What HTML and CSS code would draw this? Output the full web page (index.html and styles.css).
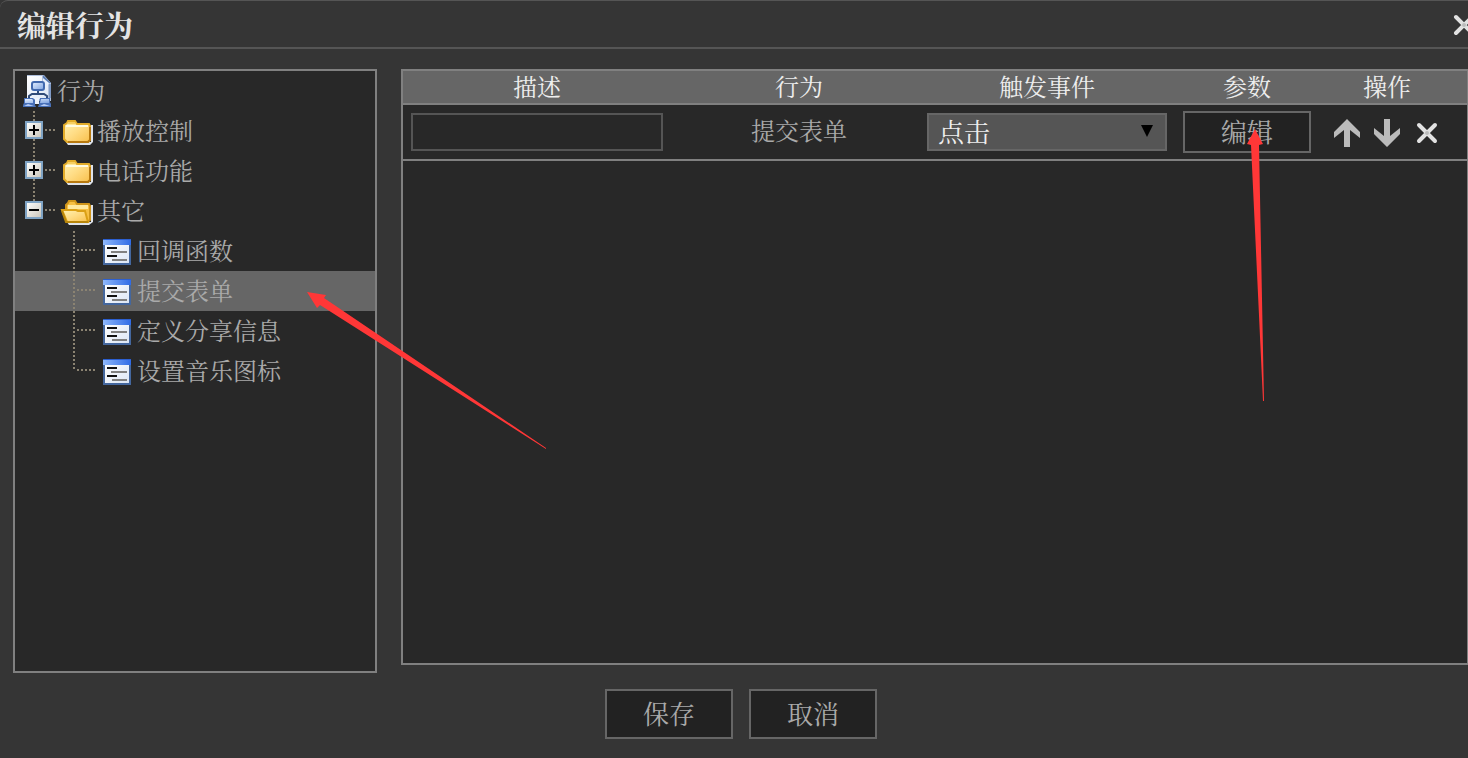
FILE: index.html
```
<!DOCTYPE html>
<html lang="zh-CN">
<head>
  <meta charset="UTF-8" />
  <meta name="viewport" content="width=device-width, initial-scale=1.0" />
  <title>编辑行为</title>
  <link rel="stylesheet" href="styles.css">
</head>
<body>
  <!-- icons -->
  <svg class="sprite" aria-hidden="true">
    <defs>
      <linearGradient id="g-folder" x1="0" y1="0" x2="1" y2="1">
        <stop offset="0" stop-color="#fff3b4" />
        <stop offset=".5" stop-color="#ffdc84" />
        <stop offset="1" stop-color="#f8c04c" />
      </linearGradient>
      <linearGradient id="g-bar" x1="0" y1="0" x2="1" y2="0">
        <stop offset="0" stop-color="#8fb8fa" />
        <stop offset="1" stop-color="#2f6be6" />
      </linearGradient>
      <linearGradient id="g-sheet" x1="0" y1="0" x2="1" y2="1">
        <stop offset="0" stop-color="#ffffff" />
        <stop offset="1" stop-color="#dce6f5" />
      </linearGradient>
      <linearGradient id="g-box" x1="0" y1="0" x2="1" y2="1">
        <stop offset="0" stop-color="#ffffff" />
        <stop offset="1" stop-color="#c9c4b8" />
      </linearGradient>
      <linearGradient id="g-node" x1="0" y1="0" x2="1" y2="1">
        <stop offset="0" stop-color="#e4efff" />
        <stop offset="1" stop-color="#7ea3e0" />
      </linearGradient>
    </defs>
    <symbol id="i-root" viewBox="0 0 40 40">
      <path d="M12 4h17l7 8v18H12z" fill="#aebfdc" />
      <path d="M12 5h15v6l6 3v14H12z" fill="url(#g-sheet)" />
      <path d="M28 4l8 8h-3l-5-3z" fill="#5b7db3" />
      <path d="M28 7l6 5-1 2h-5z" fill="#e8f0fc" />
      <path d="M34 13h2v14h-2z" fill="#7f9ac6" />
      <rect x="17" y="11" width="12" height="8" rx="2" fill="url(#g-node)" stroke="#4169ae" stroke-width="2" />
      <path d="M23 20v3M14 27v-2l3-2h12l3 2v2" fill="none" stroke="#2f4a78" stroke-width="2" />
      <path d="M20 27h4v6h-4z" fill="#eef3fb" />
      <path d="M9 27h9l2 2v5l1 2H8v-2l1-2zM25 27h10v4l1 2v3H23l1-3z" fill="#4870b8" />
      <path d="M10 28h7l1 1v3h-8zM26 28h8v4h-9z" fill="url(#g-node)" />
      <path d="M9 35l4-2 6 2zM25 35l4-2 6 2z" fill="#b4cbf5" />
    </symbol>
    <symbol id="i-plus" viewBox="0 0 18 18">
      <rect x="1" y="1" width="16" height="16" fill="url(#g-box)" stroke="#7fa3c4" stroke-width="2" />
      <path d="M4 9h10M9 4v10" stroke="#000" stroke-width="2" />
    </symbol>
    <symbol id="i-minus" viewBox="0 0 18 18">
      <rect x="1" y="1" width="16" height="16" fill="url(#g-box)" stroke="#7fa3c4" stroke-width="2" />
      <path d="M4 9h10" stroke="#000" stroke-width="2" />
    </symbol>
    <symbol id="i-folder" viewBox="0 0 40 40">
      <path d="M11 31h25V14h2v17l-3 3H13z" fill="#dfe3ea" />
      <path d="M9 14l3-2 1-2h7l2 3h12l1 2v14l-2 2H12l-3-3z" fill="url(#g-folder)" stroke="#e3ac2a" stroke-width="2" />
      <path d="M13 11h7l1 2h-9z" fill="#f6cf62" />
      <path d="M11 15h22" stroke="#fffbe0" stroke-width="2" />
      <path d="M35 16v13l-2 2H13" fill="none" stroke="#b87a10" stroke-width="2" />
    </symbol>
    <symbol id="i-open" viewBox="0 0 40 40">
      <path d="M12 31h24V14h2v17l-4 3H14z" fill="#dfe3ea" />
      <path d="M11 20v-6l2-2 1-2h6l2 3h12l1 2v14l-3 2z" fill="#f7c043" stroke="#d0951a" stroke-width="2" />
      <path d="M13 14h20v4H13z" fill="#ffe9a0" />
      <path d="M7 19h14l2 1h7l3 11H12z" fill="url(#g-folder)" stroke="#dba015" stroke-width="2" />
      <path d="M7 20l4 11h22" fill="none" stroke="#b8860b" stroke-width="2" />
    </symbol>
    <symbol id="i-item" viewBox="0 0 40 40">
      <path d="M8 8h28v26H8z" fill="#44679e" />
      <path d="M10 12h24v20H10z" fill="url(#g-sheet)" />
      <path d="M8 8h28v6H8z" fill="url(#g-bar)" />
      <path d="M8 8h28v1H8z" fill="#2c5fd0" />
      <path d="M12 17h10M12 25h10" stroke="#111" stroke-width="2" />
      <path d="M16 21h16M17 29h15" stroke="#808080" stroke-width="2" />
    </symbol>
    <symbol id="i-up" viewBox="0 0 28 28">
      <path d="M14 0l13 13v6l-10-8v17h-6V11L1 19v-6z" />
    </symbol>
    <symbol id="i-close" viewBox="0 0 22 22">
      <path d="M3 3l16 16M19 3L3 19" fill="none" stroke="#e2e2e2" stroke-width="4" stroke-linecap="round" />
      <circle cx="11" cy="11" r="2" fill="#bbb" />
    </symbol>
  </svg>

  <div class="dialog">
    <header class="dialog-head">
      <h1>编辑行为</h1>
      <button type="button" class="icon-btn" aria-label="关闭"><svg class="icon-x"><use href="#i-close" /></svg></button>
    </header>

    <div class="dialog-body">
      <ul class="tree">
        <li>
          <div class="node"><svg class="cell"><use href="#i-root" /></svg><span>行为</span></div>
          <ul>
            <li>
              <div class="node">
                <button type="button" class="cell branch" aria-label="展开"><svg><use href="#i-plus" /></svg></button>
                <svg class="cell"><use href="#i-folder" /></svg><span>播放控制</span>
              </div>
            </li>
            <li>
              <div class="node">
                <button type="button" class="cell branch" aria-label="展开"><svg><use href="#i-plus" /></svg></button>
                <svg class="cell"><use href="#i-folder" /></svg><span>电话功能</span>
              </div>
            </li>
            <li>
              <div class="node">
                <button type="button" class="cell branch last" aria-label="收起"><svg><use href="#i-minus" /></svg></button>
                <svg class="cell"><use href="#i-open" /></svg><span>其它</span>
              </div>
              <ul>
                <li><div class="node leaf"><i class="cell line"></i><svg class="cell"><use href="#i-item" /></svg><span>回调函数</span></div></li>
                <li><div class="node leaf selected"><i class="cell line"></i><svg class="cell"><use href="#i-item" /></svg><span>提交表单</span></div></li>
                <li><div class="node leaf"><i class="cell line"></i><svg class="cell"><use href="#i-item" /></svg><span>定义分享信息</span></div></li>
                <li><div class="node leaf"><i class="cell line last"></i><svg class="cell"><use href="#i-item" /></svg><span>设置音乐图标</span></div></li>
              </ul>
            </li>
          </ul>
        </li>
      </ul>

      <div class="list">
        <table>
          <colgroup>
            <col class="col-desc"><col class="col-name"><col class="col-event"><col class="col-param"><col class="col-ops"><col>
          </colgroup>
          <thead>
            <tr><th>描述</th><th>行为</th><th>触发事件</th><th>参数</th><th>操作</th><th></th></tr>
          </thead>
          <tbody>
            <tr>
              <td><input type="text" class="desc" aria-label="描述"></td>
              <td class="name">提交表单</td>
              <td>
                <div class="select">
                  <select aria-label="触发事件"><option>点击</option></select>
                </div>
              </td>
              <td><button type="button" class="btn btn-small">编辑</button></td>
              <td>
                <div class="ops">
                  <button type="button" class="icon-btn" aria-label="上移"><svg class="icon-arrow"><use href="#i-up" /></svg></button>
                  <button type="button" class="icon-btn" aria-label="下移"><svg class="icon-arrow down"><use href="#i-up" /></svg></button>
                  <button type="button" class="icon-btn" aria-label="删除"><svg class="icon-x"><use href="#i-close" /></svg></button>
                </div>
              </td>
              <td></td>
            </tr>
          </tbody>
        </table>
      </div>
    </div>

    <footer class="dialog-foot">
      <button type="button" class="btn">保存</button>
      <button type="button" class="btn">取消</button>
    </footer>

    <!-- red pointer arrows over the dialog -->
    <svg class="pointer pointer-tree" viewBox="0 0 240 158" aria-hidden="true">
      <path d="M0 1l19 3-2 3 222 150v1L13 14l-3 3z" />
    </svg>
    <svg class="pointer pointer-edit" viewBox="0 0 18 274" aria-hidden="true">
      <path d="M8 2l8 15-4 1 5 256h-1L4 18l-4-1z" />
    </svg>
  </div>
</body>
</html>
```
FILE: styles.css
```
* {
  box-sizing: border-box;
}
body {
  margin: 0;
  overflow: hidden;
  background: #353535;
  color: #aaa;
  font-family: "Noto Serif CJK SC", "Noto Sans CJK SC", serif;
  font-size: 24px;
}
button, input, select {
  font-family: inherit;
  color: inherit;
  padding: 0;
  margin: 0;
  border: none;
  background: none;
  border-radius: 0;
}
ul {
  list-style: none;
  margin: 0;
  padding: 0;
}
svg {
  display: block;
}
.sprite {
  position: absolute;
  width: 0;
  height: 0;
}

/* the dialog is a little wider than the window */
.dialog {
  position: relative;
  width: calc(100% + 14px);
  min-height: 100vh;
  display: flex;
  flex-direction: column;
  border-top: 1px solid #555;
  border-radius: 8px 0 0 0;
}
.dialog-head {
  display: flex;
  align-items: center;
  justify-content: space-between;
  height: 48px;
  padding: 2px 7px 0 17px;
  border-bottom: 2px solid #555;
}
h1 {
  margin: 0;
  font-size: 29px;
  line-height: 44px;
  color: #e4e4e4;
}
.dialog-body {
  display: flex;
  align-items: flex-start;
  gap: 24px;
  padding: 20px 13px 0;
}

.tree {
  flex: none;
  width: 364px;
  height: 604px;
  border: 2px solid #808080;
  background: #282828;
}
.node {
  display: flex;
  height: 40px;
}
.node span {
  padding-left: 2px;
  line-height: 38px;
}
.leaf {
  padding-left: 40px;
}
.selected {
  background: #666;
}
.cell {
  flex: none;
  width: 40px;
  height: 40px;
}
.branch,
.line {
  background-image:
    repeating-linear-gradient(to bottom, #8b8372 0 2px, transparent 2px 4px),
    repeating-linear-gradient(to right, #8b8372 0 2px, transparent 2px 4px);
  background-repeat: no-repeat;
  background-position: 18px 0, 22px 18px;
  background-size: 2px 40px, 18px 2px;
}
.branch {
  padding: 0 0 2px 10px;
  background-position: 18px 0, 30px 18px;
  background-size: 2px 40px, 10px 2px;
}
.branch svg {
  width: 18px;
  height: 18px;
}
.branch.last {
  background-size: 2px 18px, 10px 2px;
}
.line.last {
  background-size: 2px 20px, 18px 2px;
}

.list {
  flex: 1;
  height: 596px;
  border: 2px solid #808080;
  background: #282828;
}
table {
  width: 100%;
  table-layout: fixed;
  border-collapse: separate;
  border-spacing: 0;
}
.col-desc { width: 268px; }
.col-name { width: 256px; }
.col-event { width: 240px; }
.col-param { width: 160px; }
.col-ops { width: 120px; }
th, td {
  padding: 0;
  text-align: center;
  font-weight: 400;
  border-bottom: 2px solid #808080;
}
th {
  height: 34px;
  padding-bottom: 2px;
  line-height: 30px;
  color: #eee;
  background: #666;
}
td {
  height: 56px;
}
.name {
  padding-bottom: 4px;
  line-height: 50px;
}
.desc {
  display: block;
  width: 252px;
  height: 38px;
  margin-left: 8px;
  padding: 0 8px;
  font-size: 24px;
  border: 2px solid #555;
}
.select {
  position: relative;
}
.select select {
  display: block;
  appearance: none;
  width: 100%;
  height: 38px;
  padding: 0 32px 2px 9px;
  font-size: 26px;
  line-height: 32px;
  color: #eee;
  background: #555;
  border: 2px solid #666;
}
.select::after {
  content: "";
  position: absolute;
  top: 12px;
  right: 14px;
  width: 12px;
  height: 12px;
  background: #000;
  clip-path: polygon(0 0, 100% 0, 50% 100%);
  pointer-events: none;
}
.btn {
  width: 128px;
  height: 50px;
  padding-bottom: 2px;
  font-size: 26px;
  line-height: 44px;
  border: 2px solid #666;
  background: #222;
}
.btn-small {
  display: block;
  height: 42px;
  margin: 0 auto;
  line-height: 36px;
}
.icon-btn,
.btn {
  cursor: pointer;
}
.ops {
  display: flex;
  align-items: center;
  justify-content: center;
  gap: 12px;
  padding-top: 2px;
}
.ops .icon-btn {
  display: flex;
  justify-content: center;
  width: 28px;
}
.icon-arrow {
  width: 28px;
  height: 28px;
  fill: #bbb;
}
.icon-arrow.down {
  transform: rotate(180deg);
}
.icon-x {
  width: 22px;
  height: 22px;
}

.dialog-foot {
  display: flex;
  justify-content: center;
  gap: 16px;
  padding: 16px 0 19px;
}

.pointer {
  position: absolute;
  fill: #ff3737;
  pointer-events: none;
}
.pointer-tree {
  top: 290px;
  left: 307px;
  width: 240px;
  height: 158px;
}
.pointer-edit {
  top: 126px;
  left: 1247px;
  width: 18px;
  height: 274px;
}
```
